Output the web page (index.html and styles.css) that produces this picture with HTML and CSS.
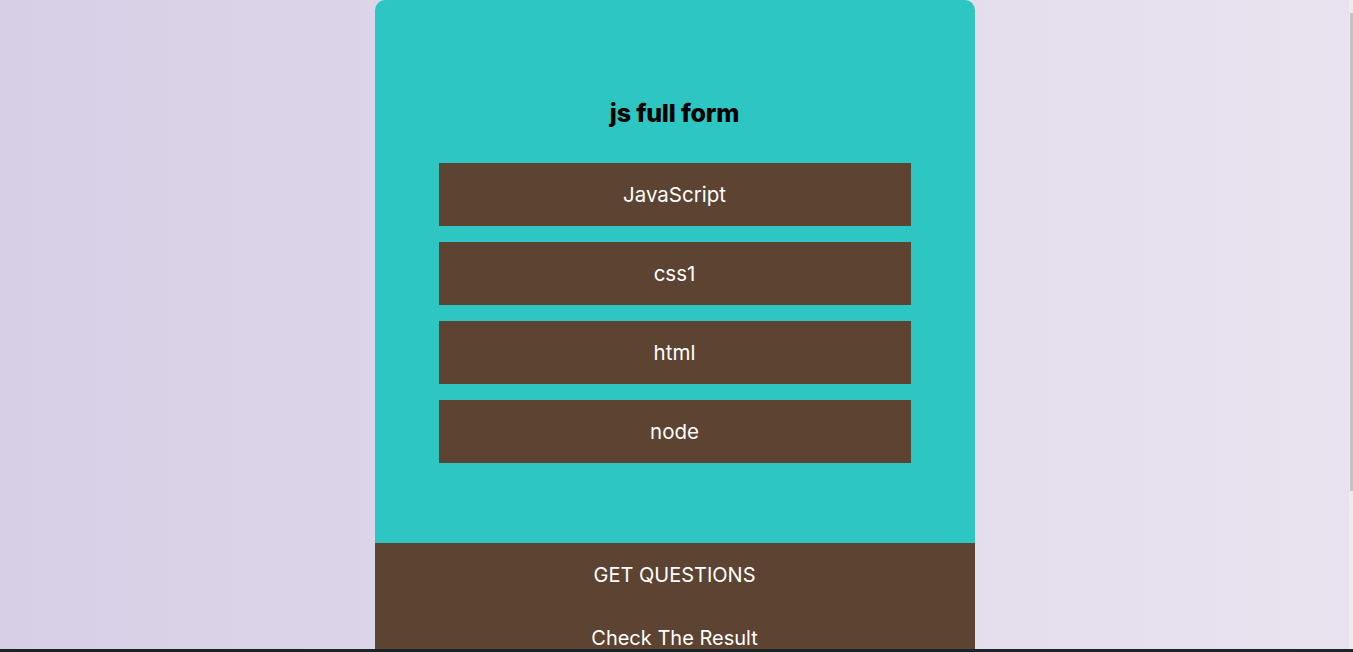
FILE: index.html
```html
<!DOCTYPE html>
<html lang="en">
<head>
<meta charset="UTF-8">
<title>Quiz</title>
<link rel="stylesheet" href="styles.css">
</head>
<body>
<main class="quiz">
  <section class="quiz-body">
    <h2 class="question">js full form</h2>
    <ul class="options">
      <li class="option">JavaScript</li>
      <li class="option">css1</li>
      <li class="option">html</li>
      <li class="option">node</li>
    </ul>
  </section>
  <div class="actions">
    <button class="action">GET QUESTIONS</button>
    <button class="action">Check The Result</button>
  </div>
</main>
<div class="scrollbar"><div class="thumb"></div></div>
<div class="taskbar"></div>
</body>
</html>
```

FILE: styles.css
```css
* { box-sizing: border-box; }
html, body { height: 100%; }
body {
  margin: 0;
  padding-right: 4px;
  overflow: hidden;
  font-family: Inter, "Open Sans", sans-serif;
  background: linear-gradient(90deg, #d7cfe5 0%, #e9e3f0 100%);
}
.quiz {
  width: 600px;
  margin: 0 auto;
  border-radius: 10px 10px 0 0;
  overflow: hidden;
  background: #2ec6c2;
}
.quiz-body {
  padding: 95px 64px 80px;
  display: flex;
  flex-direction: column;
  align-items: center;
}
.question {
  margin: 0 0 32px;
  font-size: 25px;
  line-height: 36px;
  font-weight: 800;
  color: #000;
  letter-spacing: -0.2px;
}
.options {
  list-style: none;
  margin: 0;
  padding: 0;
  width: 100%;
  display: flex;
  flex-direction: column;
  gap: 16px;
}
.option {
  height: 63px;
  display: flex;
  align-items: center;
  justify-content: center;
  background: #5c4332;
  color: #fff;
  font-size: 20.5px;
  font-weight: 400;
}
.actions {
  background: #5c4332;
  display: flex;
  flex-direction: column;
}
.action {
  height: 63px;
  border: 0;
  background: transparent;
  color: #fff;
  font-family: inherit;
  font-size: 20px;
  padding: 0;
}
.scrollbar {
  position: fixed;
  top: 0;
  right: 0;
  width: 4px;
  height: 649px;
  background: #ededf0;
}
.thumb {
  margin: 13px 0 0 1px;
  width: 3px;
  height: 478px;
  background: #c3c3c5;
}
.taskbar {
  position: fixed;
  left: 0;
  right: 0;
  bottom: 0;
  height: 3px;
  background: #1d2326;
}
```
